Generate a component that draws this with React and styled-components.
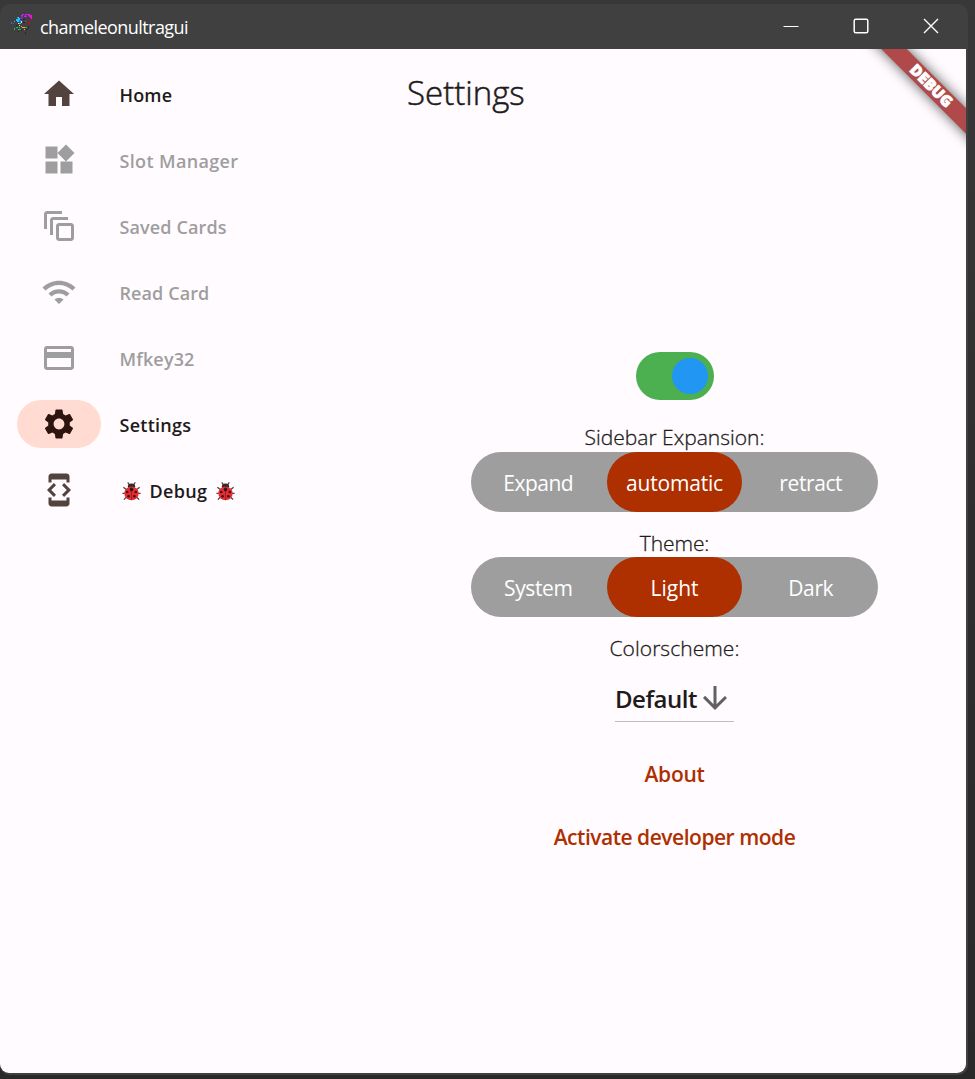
import React from 'react';
import styled, { createGlobalStyle, css } from 'styled-components';
import {
  MdHome, MdWidgets, MdOutlineAutoAwesomeMotion, MdWifi, MdCreditCard,
  MdSettings, MdDeveloperMode, MdArrowDownward,
} from 'react-icons/md';

const Global = createGlobalStyle`
  * { box-sizing: border-box; }
  body { margin: 0; background: #2e2e2e; font-family: "Open Sans", "Noto Sans", sans-serif; }
  button { font: inherit; border: 0; padding: 0; background: none; }
  svg { flex: none; }
`;

const Desktop = styled.div`
  width: 975px;
  height: 1079px;
  overflow: hidden;
  padding-top: 4px;
  background: linear-gradient(180deg, #383838 0%, #363636 12%, #2e2e2e 50%, #292929 100%);
`;
const Window = styled.div`
  width: 968px;
  height: 1071px;
  display: flex;
  flex-direction: column;
  padding: 0 2px 2px 0;
  background: #404040;
  border-radius: 10px;
`;
const TitleBar = styled.header`
  height: 45px;
  flex: none;
  display: flex;
  align-items: center;
  padding-left: 9px;
  color: #fff;
`;
const AppIcon = styled.svg`
  margin-bottom: 7px;
`;
const AppName = styled.span`
  flex: 1;
  margin: 0 0 0 7px;
  font-size: 18px;
  line-height: 24px;
  letter-spacing: ${(p) => p.$track}px;
`;
const Caption = styled.button`
  width: ${(p) => p.$w || 70}px;
  height: 45px;
  padding: 0 0 1px;
  display: grid;
  place-items: center;
  color: #fff;
`;
const Body = styled.div`
  flex: 1;
  display: flex;
  position: relative;
  overflow: hidden;
  background: #fffbff;
  color: #201a18;
  border-radius: 0 0 9px 9px;
`;
const Nav = styled.nav`
  width: 382px;
  flex: none;
  padding: 12px 0 0 17px;
`;
const NavItem = styled.div`
  height: 66px;
  display: flex;
  align-items: center;
  color: ${(p) => (p.$off ? '#9e9e9e' : '#53433f')};
`;
const Pill = styled.span`
  width: 84px;
  height: 48px;
  display: grid;
  place-items: center;
  border-radius: 24px;
  ${(p) => p.$on && css`background: #ffdbd1; color: #2c150f;`}
`;
const NavLabel = styled.span`
  margin-left: ${(p) => (p.$wide ? 19.5 : 18.5)}px;
  padding-top: 2px;
  display: flex;
  align-items: center;
  gap: 8px;
  font-size: 18px;
  line-height: 24px;
  font-weight: 600;
  letter-spacing: ${(p) => p.$track}px;
  color: ${(p) => (p.$off ? '#9e9e9e' : '#201a18')};
`;
const Main = styled.main`
  width: 584px;
  display: flex;
  flex-direction: column;
`;
const Title = styled.h1`
  margin: 0 0 0 25px;
  height: 84px;
  padding-top: 22px;
  font-size: 33px;
  line-height: 44px;
  font-weight: 300;
  -webkit-text-stroke: 0.5px currentColor;
  letter-spacing: 0;
`;
const Panel = styled.section`
  display: flex;
  flex-direction: column;
  align-items: center;
  padding: 219.400px 0 0 1px;
`;
const Switch = styled.div`
  width: 78px;
  height: 48px;
  margin-bottom: 22px;
  padding: 6px;
  display: flex;
  justify-content: flex-end;
  border-radius: 24px;
  background: #4caf50;
`;
const Knob = styled.span`
  width: 36px;
  height: 36px;
  border-radius: 50%;
  background: #2196f3;
`;
const Heading = styled.div`
  height: 29.300px;
  font-size: 21px;
  line-height: 30px;
  font-weight: 300;
  -webkit-text-stroke: 0.3px currentColor;
  letter-spacing: ${(p) => p.$track}px;
  white-space: nowrap;
`;
const Segments = styled.div`
  width: 407.500px;
  height: 60px;
  margin-bottom: 16px;
  display: flex;
  justify-content: space-between;
  border-radius: 30px;
  background: #9e9e9e;
`;
const Segment = styled.button`
  width: 135px;
  height: 60px;
  padding-top: 3px;
  border-radius: 30px;
  color: #fff;
  font-size: 21px;
  line-height: 30px;
  letter-spacing: ${(p) => p.$track}px;
  ${(p) => p.$on && css`background: #ae2f00;`}
`;
const Select = styled.div`
  width: 119px;
  height: 46px;
  margin: 13.500px 0 20.500px;
  display: flex;
  align-items: center;
  border-bottom: 1px solid #bdbdbd;
  color: #201a18;
  font-size: 24px;
  font-weight: 600;
  letter-spacing: ${(p) => p.$track}px;

  svg { color: #616161; }
`;
const LinkButton = styled.button`
  height: 63px;
  color: #ae2f00;
  font-size: 21px;
  line-height: 30px;
  font-weight: 600;
  letter-spacing: ${(p) => p.$track}px;
`;
const Banner = styled.div`
  position: absolute;
  top: 27.500px;
  right: -44.500px;
  width: 160px;
  height: 18px;
  transform: rotate(45deg);
  background: #b04a4a;
  box-shadow: 0 0 13px rgba(0, 0, 0, 0.65);
  color: #fff;
  font-size: 15.3px;
  line-height: 16px;
  font-weight: 800;
  -webkit-text-stroke: 0.8px #fff;
  text-align: center;
`;

const specks = [
  ['#e016e8', 'M13 3h2v1h-2zM16 3h5v1h-5zM12 4h2v1h-2zM19 4h4v1h-4zM20 5h3v1h-3zM21 6h2v1h-2zM22 7h1v1h-1zM15 5h3v1h-3z'],
  ['#7a2be0', 'M12 5h2v2h-2zM15 4h2v1h-2zM11 7h2v1h-2z'],
  ['#25c6e8', 'M8 6h2v1h-2zM7 8h4v2h-4zM9 7h2v1h-2zM8 10h2v1h-2zM10 12h2v1h-2zM5 10h1v1h-1z'],
  ['#2f6df0', 'M10 9h2v2h-2zM11 11h1v1h-1zM2 11h1v2h-1zM4 12h1v1h-1zM16 10h1v1h-1z'],
  ['#a31531', 'M18 9h2v1h-2zM21 8h1v2h-1zM14 13h2v1h-2zM19 11h2v2h-2zM17 13h1v1h-1z'],
  ['#e8e8d0', 'M9 12h1v1h-1zM12 10h1v2h-1zM10 14h1v1h-1z'],
  ['#e2b62c', 'M13 16h3v1h-3zM12 15h1v1h-1zM15 18h1v1h-1z'],
  ['#27b765', 'M5 17h1v2h-1zM7 16h2v1h-2zM9 18h3v1h-3zM16 16h2v1h-2zM10 16h1v1h-1z'],
  ['#26262b', 'M14 8h2v1h-2zM7 14h2v1h-2zM12 18h1v2h-1zM17 18h2v1h-2zM14 11h2v1h-2zM9 20h1v1h-1zM16 21h1v2h-1zM19 15h1v2h-1z'],
];
const Chameleon = () => (
  <AppIcon width="24" height="24" viewBox="0 0 24 24" shapeRendering="crispEdges">
    {specks.map(([fill, d]) => <path key={fill} d={d} fill={fill} />)}
  </AppIcon>
);

const Ladybug = () => (
  <svg width="21" height="21" viewBox="0 0 22 22" role="img" aria-label="ladybug">
    <path d="M7 1.500L9 4M15 1.500L13 4M2.500 6.500l3 2.500M19.500 6.500l-3 2.500M1.500 13H5M20.500 13H17M3 19.500l3-3M19 19.500l-3-3" stroke="#4a4444" strokeWidth="1.300" fill="none" />
    <ellipse cx="11" cy="5.500" rx="3.800" ry="3" fill="#2b2b2b" />
    <ellipse cx="11" cy="13" rx="7.500" ry="7.200" fill="#f0282d" />
    <path d="M11 6v14" stroke="#2b2b2b" strokeWidth="0.500" />
    <g fill="#1f1f1f">
      <circle cx="11" cy="9" r="1.900" /><circle cx="6.500" cy="11.500" r="1.400" /><circle cx="15.500" cy="11.500" r="1.400" />
      <circle cx="8" cy="16" r="1.400" /><circle cx="14" cy="16" r="1.400" />
    </g>
  </svg>
);

const items = [
  { label: 'Home', icon: MdHome, track: 0.15 },
  { label: 'Slot Manager', icon: MdWidgets, off: true, track: 0.35 },
  { label: 'Saved Cards', icon: MdOutlineAutoAwesomeMotion, off: true, track: 0.12 },
  { label: 'Read Card', icon: MdWifi, off: true, track: 0.1 },
  { label: 'Mfkey32', icon: MdCreditCard, off: true, track: 0.15 },
  { label: 'Settings', icon: MdSettings, on: true, track: 0.25 },
  { label: 'Debug', icon: MdDeveloperMode, bugs: true, track: 0.3 },
];

export default function App() {
  return (
    <Desktop>
      <Global />
      <Window>
        <TitleBar>
          <Chameleon />
          <AppName $track={-0.57}>chameleonultragui</AppName>
          <Caption aria-label="Minimize">
            <svg width="16" height="16" viewBox="0 0 16 16"><path d="M0.500 8.500h15" stroke="currentColor" /></svg>
          </Caption>
          <Caption aria-label="Maximize" $w={69}>
            <svg width="16" height="16" viewBox="0 0 16 16"><rect x="1.200" y="1.200" width="13.600" height="13.600" rx="1.500" fill="none" stroke="currentColor" strokeWidth="1.500" /></svg>
          </Caption>
          <Caption aria-label="Close" $w={71}>
            <svg width="16" height="16" viewBox="0 0 16 16"><path d="M1 1l14 14M15 1L1 15" stroke="currentColor" strokeWidth="1.400" /></svg>
          </Caption>
        </TitleBar>
        <Body>
          <Nav>
            {items.map(({ label, icon: Icon, on, off, bugs, track }) => (
              <NavItem key={label} $off={off}>
                <Pill $on={on}><Icon size={36} /></Pill>
                <NavLabel $off={off} $track={track} $wide={bugs}>
                  {bugs && <Ladybug />}
                  {label}
                  {bugs && <Ladybug />}
                </NavLabel>
              </NavItem>
            ))}
          </Nav>
          <Main>
            <Title>Settings</Title>
            <Panel>
              <Switch><Knob /></Switch>
              <Heading $track={0}>Sidebar Expansion:</Heading>
              <Segments>
                <Segment $track={-0.5}>Expand</Segment>
                <Segment $on $track={-0.2}>automatic</Segment>
                <Segment $track={-0.4}>retract</Segment>
              </Segments>
              <Heading $track={-0.1}>Theme:</Heading>
              <Segments>
                <Segment $track={-0.4}>System</Segment>
                <Segment $on $track={0}>Light</Segment>
                <Segment $track={-0.4}>Dark</Segment>
              </Segments>
              <Heading $track={0.05}>Colorscheme:</Heading>
              <Select $track={-0.5}>Default<MdArrowDownward size={36} /></Select>
              <LinkButton $track={-0.3}>About</LinkButton>
              <LinkButton $track={-0.48}>Activate developer mode</LinkButton>
            </Panel>
          </Main>
          <Banner>DEBUG</Banner>
        </Body>
      </Window>
    </Desktop>
  );
}
